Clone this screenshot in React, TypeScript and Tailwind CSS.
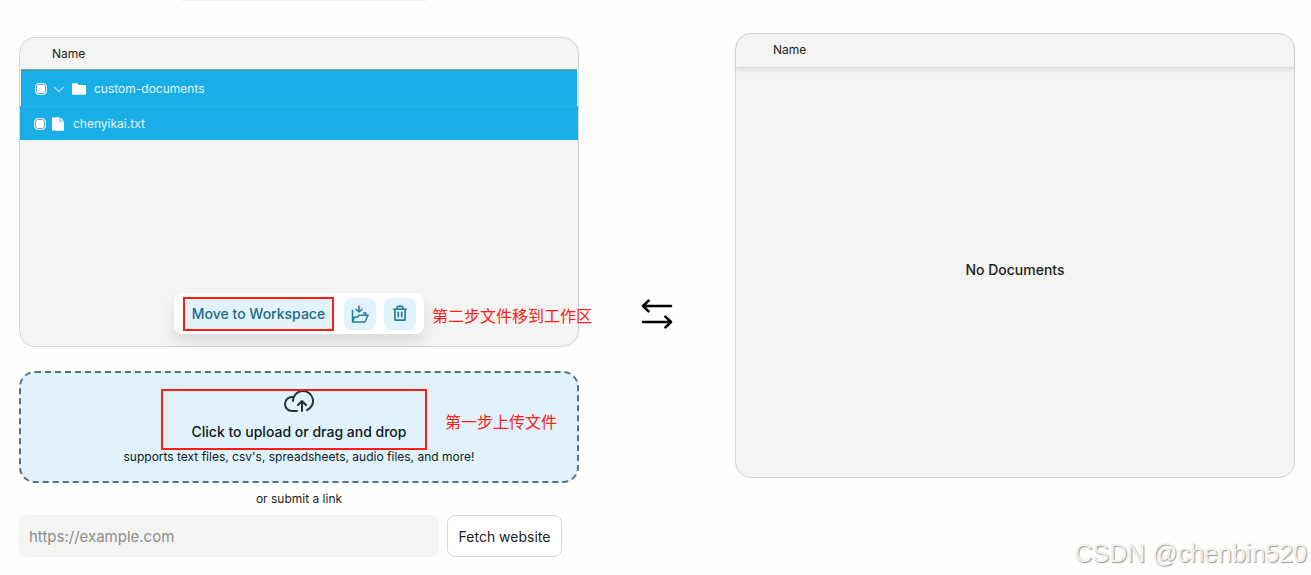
import { PiCaretDown, PiCloudArrowUp, PiTrashBold } from "react-icons/pi";

function Checkbox({ id }: { id: string }) {
  return (
    <input
      id={id}
      type="checkbox"
      defaultChecked
      className="size-3 shrink-0 appearance-none rounded-[4px] border border-[#d9f1fa] bg-[#5f8ea3] shadow-[inset_0_0_0_1px_#6fa3ba] checked:bg-white"
    />
  );
}

function FolderIcon() {
  return (
    <svg viewBox="0 0 14 12" className="h-3 w-3.5 shrink-0" fill="white" aria-hidden="true">
      <path d="M0 1.2C0 .6.5.2 1 .2h3.6c.3 0 .5.1.7.3L6.8 2H13c.6 0 1 .4 1 1v7.8c0 .6-.4 1-1 1H1c-.6 0-1-.4-1-1V1.200Z" />
    </svg>
  );
}

function FileIcon() {
  return (
    <svg viewBox="0 0 12 14" className="h-3.5 w-3 shrink-0" fill="white" aria-hidden="true">
      <path d="M0 1.200C0 .6.5.3 1 .3h6.600v3.500c0 .4.3.7.7.7H12v8.200c0 .6-.4 1-1 1H1c-.5 0-1-.4-1-1V1.200Z" />
      <path d="M8.400.5 11.800 3.800H8.400V.5Z" />
    </svg>
  );
}

function MoveIcon() {
  return (
    <svg viewBox="0 0 18 20" className="h-5 w-[18px]" fill="none" stroke="#28799a" strokeWidth="1.500" strokeLinecap="round" strokeLinejoin="round" aria-hidden="true">
      <path d="M8 2v5.800M5 5.300 8 8l3-2.700" />
      <path d="M1.500 18V6.500M1.500 18h12.300L17 11.300H8.200L6.400 13.100H3.400L1.500 18M14.800 11V9.100h-2.300" />
    </svg>
  );
}

function TransferIcon() {
  return (
    <svg viewBox="0 0 32 32" className="size-8" fill="none" stroke="black" strokeWidth="2.600" strokeLinecap="round" strokeLinejoin="round" aria-hidden="true">
      <path d="M30 8H2M7.600 2.600 2 8l5.600 5.400" />
      <path d="M2 24h28M24.400 18.600 30 24l-5.600 5.400" />
    </svg>
  );
}

export default function App() {
  return (
    <div className="relative min-h-screen overflow-hidden bg-[#fefefd] pr-4 pl-[19px] font-['Inter','Noto_Sans_CJK_SC',sans-serif] text-[#1c1c1c]">
      <div className="ml-[162px] h-px w-[246px] bg-[#f3f3f2]" />
      <main className="grid grid-cols-[1fr_156px_1fr]">
        <div className="pt-9">
          <section className="relative h-[310px] rounded-2xl border border-[#d2d5d5] bg-[#f4f5f3]">
            <h2 className="flex h-8 items-center pl-8 text-xs">Name</h2>
            <ul className="text-xs text-[#e2f5fc]">
              <li className="mx-px flex h-9 items-center border-t border-t-[#3b94b0] bg-[#19aee5] pl-3.5 shadow-[0_-1px_0_#6fa5b5]">
                <Checkbox id="folder" />
                <button type="button" aria-label="Collapse folder" className="mr-1.5 ml-[5px]">
                  <PiCaretDown className="size-3.5" />
                </button>
                <FolderIcon />
                <label htmlFor="folder" className="ml-2">custom-documents</label>
              </li>
              <li className="flex h-[34px] items-center border-t border-t-[#26b4e9] bg-[#19aee5] pl-3.5">
                <Checkbox id="file" />
                <span className="ml-1.5 flex"><FileIcon /></span>
                <label htmlFor="file" className="ml-[9px]">chenyikai.txt</label>
              </li>
            </ul>
            <div className="absolute inset-x-0 bottom-3 flex justify-center">
              <div className="relative flex h-[41px] items-center rounded-lg bg-white pt-px pr-2 pl-[9px] shadow-[0_8px_14px_rgba(0,0,0,0.1)]">
                <button type="button" className="mr-2.5 h-[34px] w-[151px] border-2 border-[#fb2013] bg-[#e1f2fa] text-sm font-medium whitespace-nowrap text-[#236a88]">
                  Move to Workspace
                </button>
                <button type="button" aria-label="Move to folder" className="mr-2 flex size-8 items-center justify-center rounded-lg bg-[#e1f3fb]">
                  <MoveIcon />
                </button>
                <button type="button" aria-label="Delete" className="flex size-8 items-center justify-center rounded-lg bg-[#e1f3fb] text-[#28799a]">
                  <PiTrashBold className="size-[18px]" />
                </button>
                <span className="absolute top-[11px] left-full ml-2 text-base leading-6 whitespace-nowrap text-[#fb2013]">第二步文件移到工作区</span>
              </div>
            </div>
          </section>

          <section className="relative mt-6 flex h-28 flex-col items-center rounded-2xl border-2 border-dashed border-[#5d7079] bg-[#e1f2fc] pt-3 text-[#0d1b22]">
            <PiCloudArrowUp className="size-8 text-[#24343d]" />
            <p className="mt-[3px] text-sm leading-6 font-medium">Click to upload or drag and drop</p>
            <p className="text-xs leading-[26px]">supports text files, csv's, spreadsheets, audio files, and more!</p>
            <div className="absolute top-4 left-[140px] h-[61px] w-[266px] border-2 border-[#fb2013]" />
            <span className="absolute top-[37px] left-[424px] text-base leading-6 whitespace-nowrap text-[#fb2013]">第一步上传文件</span>
          </section>

          <p className="mt-2 text-center text-xs leading-4">or submit a link</p>
          <form className="mt-2 flex gap-2 pr-[17px]" onSubmit={(e) => e.preventDefault()}>
            <input
              type="text"
              aria-label="Website link"
              placeholder="https://example.com"
              className="h-[42px] min-w-0 flex-1 rounded-lg bg-[#f4f5f3] px-2.5 text-[15px] placeholder:text-[#8b8c8b]"
            />
            <button type="submit" className="h-[42px] w-[115px] rounded-lg border border-[#d6d8d8] bg-white pt-px text-sm whitespace-nowrap">Fetch website</button>
          </form>
        </div>

        <div className="flex justify-center pt-[297px]">
          <TransferIcon />
        </div>

        <div className="pt-8">
          <section className="flex h-[445px] flex-col rounded-2xl border border-[#d2d5d5] bg-[#f4f4f3]">
            <h2 className="flex h-[34px] items-center rounded-t-2xl border-b border-[#dcdddc] pb-px pl-[37px] text-xs shadow-[0_2px_4px_rgba(0,0,0,0.08)]">Name</h2>
            <p className="flex flex-1 items-center justify-center pb-1.5 text-sm font-medium">No Documents</p>
          </section>
        </div>
      </main>
      <span className="absolute right-1 bottom-1.5 font-['Liberation_Sans',sans-serif] text-[25px] leading-8 text-[#f0f0f0] [text-shadow:1px_1px_1px_#999]">CSDN @chenbin520</span>
    </div>
  );
}
